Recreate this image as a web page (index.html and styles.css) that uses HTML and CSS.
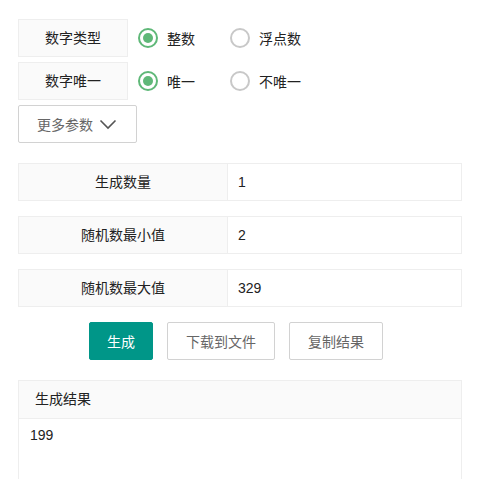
FILE: index.html
```html
<!DOCTYPE html>
<html lang="zh-CN">
<head>
<meta charset="utf-8">
<link rel="stylesheet" href="styles.css">
</head>
<body>
<div class="page">
  <div class="opt-row">
    <div class="opt-label">数字类型</div>
    <div class="radio checked"><span class="dot"></span><span class="rtext">整数</span></div>
    <div class="radio"><span class="dot"></span><span class="rtext">浮点数</span></div>
  </div>
  <div class="opt-row">
    <div class="opt-label">数字唯一</div>
    <div class="radio checked"><span class="dot"></span><span class="rtext">唯一</span></div>
    <div class="radio"><span class="dot"></span><span class="rtext">不唯一</span></div>
  </div>
  <button class="more-btn">更多参数 <svg class="chev" width="18" height="11" viewBox="0 0 18 11"><path d="M1.5 1.5 L9 9 L16.5 1.5" fill="none" stroke="#555" stroke-width="1.6"/></svg></button>

  <div class="field-row first">
    <div class="field-label">生成数量</div>
    <div class="field-value">1</div>
  </div>
  <div class="field-row">
    <div class="field-label">随机数最小值</div>
    <div class="field-value">2</div>
  </div>
  <div class="field-row">
    <div class="field-label">随机数最大值</div>
    <div class="field-value">329</div>
  </div>

  <div class="actions">
    <button class="btn primary">生成</button>
    <button class="btn">下载到文件</button>
    <button class="btn">复制结果</button>
  </div>

  <div class="result">
    <div class="result-head">生成结果</div>
    <div class="result-body">199</div>
  </div>
</div>
</body>
</html>
```
FILE: styles.css
```css
html, body {
  margin: 0;
  padding: 0;
  background: #fff;
}
body {
  font-family: "Liberation Sans", "Noto Sans CJK SC", sans-serif;
  font-size: 14px;
  color: #333;
}
.page {
  width: 444px;
  padding: 19px 0 0 18px;
}
.opt-row {
  display: flex;
  align-items: center;
  height: 38px;
  margin-bottom: 5px;
}
.opt-label {
  box-sizing: border-box;
  width: 110px;
  height: 38px;
  line-height: 36px;
  border: 1px solid #eee;
  background: #fafafa;
  text-align: center;
  color: #222;
}
.radio {
  display: flex;
  align-items: center;
  margin-left: 10px;
  width: 82px;
}
.radio + .radio {
  margin-left: 10px;
}
.dot {
  box-sizing: border-box;
  width: 20px;
  height: 20px;
  border-radius: 50%;
  border: 2px solid #c8c8c8;
  position: relative;
  flex: none;
}
.radio.checked .dot {
  border-color: #5fb878;
}
.radio.checked .dot::after {
  content: "";
  position: absolute;
  left: 3px;
  top: 3px;
  width: 10px;
  height: 10px;
  border-radius: 50%;
  background: #5fb878;
}
.rtext {
  margin-left: 9px;
  color: #222;
}
.more-btn {
  box-sizing: border-box;
  display: flex;
  align-items: center;
  width: 119px;
  height: 38px;
  margin-top: 1px;
  padding: 0 0 0 18px;
  border: 1px solid #d2d2d2;
  background: #fff;
  font-family: inherit;
  font-size: 14px;
  color: #666;
  border-radius: 2px;
}
.chev {
  margin-left: 6px;
}
.field-row {
  box-sizing: border-box;
  display: flex;
  height: 38px;
  border: 1px solid #eee;
  margin-top: 15px;
}
.field-row.first {
  margin-top: 20px;
}
.field-label {
  width: 208px;
  background: #fafafa;
  border-right: 1px solid #eee;
  text-align: center;
  line-height: 36px;
  color: #222;
}
.field-value {
  flex: 1;
  padding-left: 10px;
  line-height: 36px;
  color: #222;
}
.actions {
  display: flex;
  gap: 14px;
  padding-left: 71px;
  margin-top: 15px;
}
.btn {
  box-sizing: border-box;
  height: 38px;
  padding: 0 18px;
  border: 1px solid #d2d2d2;
  background: #fff;
  color: #666;
  font-family: inherit;
  font-size: 14px;
  border-radius: 2px;
}
.btn.primary {
  background: #009688;
  border-color: #009688;
  color: #fff;
  padding: 0 17px;
}
.result {
  margin-top: 20px;
  border: 1px solid #eee;
  border-bottom: none;
  height: 120px;
}
.result-head {
  height: 37px;
  line-height: 37px;
  background: #fafafa;
  border-bottom: 1px solid #eee;
  padding-left: 16px;
  color: #222;
}
.result-body {
  padding: 6px 11px;
  line-height: 20px;
  color: #222;
}
```
